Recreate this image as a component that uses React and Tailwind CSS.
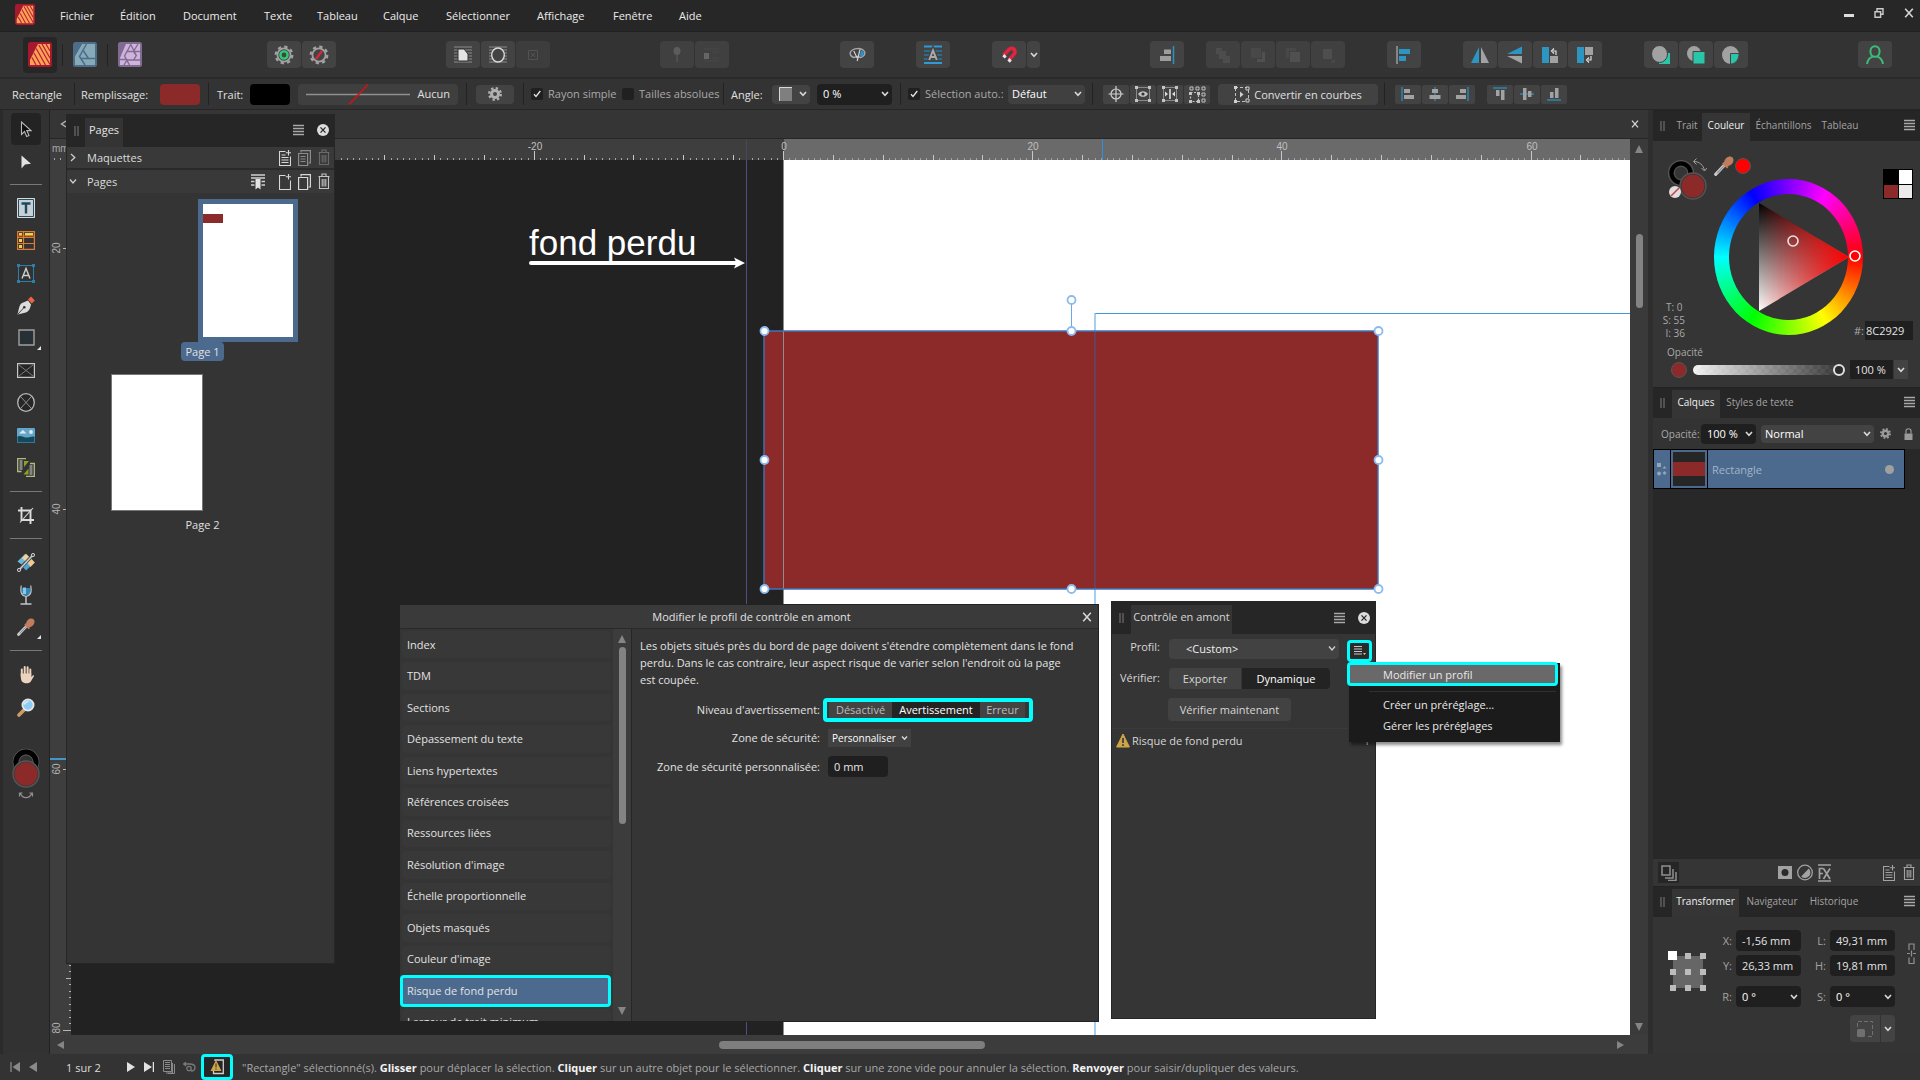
import React from "react";

const RED = "#8c2929";

/* ---------- shared pieces ---------- */

function Icon({ w = 20, h = 20, box, children, className = "" }) {
  return (
    <svg
      width={w}
      height={h}
      viewBox={box || `0 0 ${w} ${h}`}
      fill="none"
      aria-hidden="true"
      className={"shrink-0 " + className}
    >
      {children}
    </svg>
  );
}

const Chevron = ({ className = "" }) => (
  <Icon w={10} h={8} className={className}>
    <path d="M2 2l3 3.4L8 2" stroke="#d8d8d8" strokeWidth="1.6" />
  </Icon>
);

const Burger = () => (
  <button aria-label="Menu" className="shrink-0">
    <Icon w={11} h={12}>
      <path d="M0 1.5h11M0 4.5h11M0 7.5h11M0 10.5h11" stroke="#a8a8a8" strokeWidth="1.4" />
    </Icon>
  </button>
);

const Grip = () => (
  <Icon w={5} h={10}>
    <path d="M1 0v10M4 0v10" stroke="#7c7c7c" />
  </Icon>
);

const CloseDot = () => (
  <button aria-label="Fermer" className="shrink-0">
    <Icon w={12} h={12}>
      <circle cx="6" cy="6" r="6" fill="#dcdcdc" />
      <path d="M3.5 3.3l5 5.4M8.5 3.3l-5 5.4" stroke="#222" strokeWidth="1.2" />
    </Icon>
  </button>
);

const CloseX = ({ size = 10 }) => (
  <Icon w={size} h={size} box="0 0 10 10">
    <path d="M1.2 0.8l7.6 8.4M8.8 0.8L1.2 9.2" stroke="#d6d6d6" strokeWidth="1.6" />
  </Icon>
);

const Sep = ({ className = "" }) => <div className={"h-[22px] w-px shrink-0 bg-[#222] " + className} />;

function Select({ label, value, className = "", pad = "pl-2", chevron = "right-[5px]" }) {
  return (
    <div className={"relative flex shrink-0 items-center rounded-sm " + className}>
      <select
        aria-label={label}
        className={"h-full w-full appearance-none truncate bg-transparent text-white outline-none " + pad}
      >
        <option>{value}</option>
      </select>
      <Chevron className={"pointer-events-none absolute " + chevron} />
    </div>
  );
}

const Trash = ({ color = "#b9b9b9" }) => (
  <Icon w={12} h={17}>
    <path d="M0.5 3.5h11M4 3V1h4v2M1.5 4v11.5h9V4M4.2 6v7.5M6 6v7.5M7.8 6v7.5" stroke={color} strokeWidth="1.1" />
  </Icon>
);

const Warning = ({ w = 14, h = 15 }) => (
  <Icon w={w} h={h} box="0 0 14 15">
    <path d="M7 1L13.4 14H0.6z" fill="#d0a548" stroke="#d0a548" strokeLinejoin="round" />
    <path d="M7 5v5M7 11.3v1.6" stroke="#333" strokeWidth="1.6" />
  </Icon>
);

const Dropper = ({ w = 18, h = 18 }) => (
  <Icon w={w} h={h} box="0 0 18 18">
    <path d="M1.5 16.5L10 7.6" stroke="#c9c9c9" strokeWidth="2.8" strokeLinecap="round" />
    <path d="M3 15.2l6-6.3" stroke="#8a8a8a" strokeWidth="1" />
    <path d="M8 6l4.4 4.6" stroke="#c07a5a" strokeWidth="2" />
    <ellipse cx="13.3" cy="4.8" rx="3.7" ry="4.8" transform="rotate(42 13.3 4.8)" fill="#bf7d5e" />
  </Icon>
);

const PublisherLogo = ({ w, h }) => (
  <Icon w={w} h={h} box="0 0 24 25">
    <rect width="24" height="25" rx="2.5" fill="#a5182d" />
    <path d="M2 23V18L10 2H22v21z" fill="#ffa155" />
    <path
      d="M4 15.5L8 23M6 11L12.700 23M8.200 6.500L17.500 23M10.800 3L22 22.500M14 2L22 16M18 2l4 7"
      stroke="#b3253a"
      strokeWidth="1.300"
    />
  </Icon>
);

const DesignerLogo = () => (
  <Icon w={24} h={25}>
    <rect width="24" height="25" rx="2.5" fill="#4d6d88" />
    <path d="M9 2H22v21H2V14z" fill="#86aab8" />
    <path d="M13.500 2L6.500 14.500 12 23M8 16.500h14M10.500 9l5 7.500" stroke="#4d6d88" strokeWidth="1.500" />
    <path d="M2 2h7L2 14z" fill="#4d6d88" />
  </Icon>
);

const PhotoLogo = () => (
  <Icon w={24} h={25}>
    <rect width="24" height="25" rx="2.5" fill="#806c92" />
    <path d="M8 2H22v21H2V16z" fill="#d0b3dc" />
    <path
      d="M9 9.500h6.500l2.800 4-2.800 4.500H9l-2.500-4zM15.500 9.500L22 9.500M18.300 13.500L12.500 2M9 9.500L13 2M2 17.500h7M6.500 14L11.500 23M15.500 18H22M9 18l-3 5M15.500 9.500L20 2"
      stroke="#806c92"
      strokeWidth="1.400"
    />
  </Icon>
);

/* ---------- menu bar ---------- */

const MENUS = [
  ["Fichier", "w-[60px]"],
  ["Édition", "w-[63px]"],
  ["Document", "w-[81px]"],
  ["Texte", "w-[53px]"],
  ["Tableau", "w-[66px]"],
  ["Calque", "w-[63px]"],
  ["Sélectionner", "w-[91px]"],
  ["Affichage", "w-[76px]"],
  ["Fenêtre", "w-[66px]"],
  ["Aide", "w-[50px]"],
];

function MenuBar() {
  return (
    <header className="flex h-8 shrink-0 items-center border-b border-[#202020] bg-[#272727]">
      <div className="w-[60px] shrink-0 pb-0.5 pl-[15px]">
        <PublisherLogo w={20} h={21} />
      </div>
      {MENUS.map(([m, w]) => (
        <button key={m} className={"shrink-0 pt-px text-left text-[#ececec] " + w}>
          {m}
        </button>
      ))}
      <div className="ml-auto flex items-center gap-5 pb-[5px] pr-[6px]">
        <button aria-label="Réduire">
          <Icon w={10} h={10}>
            <path d="M0 7.5h10" stroke="#ddd" strokeWidth="3" />
          </Icon>
        </button>
        <button aria-label="Restaurer">
          <Icon w={10} h={10}>
            <path d="M3 3V0.8h6v5.4H7M1 3.8h5.6v5.4H1z" stroke="#ccc" strokeWidth="1.4" />
          </Icon>
        </button>
        <button aria-label="Quitter">
          <CloseX />
        </button>
      </div>
    </header>
  );
}

/* ---------- main toolbar ---------- */

function Tool({ label, children, className = "w-[34px] bg-[#434343]" }) {
  return (
    <button aria-label={label} className={"flex h-[27px] shrink-0 items-center justify-center rounded-sm " + className}>
      {children}
    </button>
  );
}

const Group = ({ children, className = "" }) => <div className={"flex shrink-0 gap-px " + className}>{children}</div>;

const GearShape = ({ children }) => (
  <Icon w={20} h={20}>
    <circle cx="10" cy="10" r="6.6" stroke="#a2a2a2" strokeWidth="1.8" />
    <circle cx="10" cy="10" r="8.3" stroke="#a2a2a2" strokeWidth="2.2" strokeDasharray="3.3 3.22" />
    {children}
  </Icon>
);

const Lines = () => <path d="M0 1h18M0 4h18M0 7h18M0 10h18M0 13h18M0 16h18" stroke="#8b8b8b" strokeWidth="1.2" />;

function Toolbar() {
  return (
    <div className="flex h-[47px] shrink-0 items-center border-b-2 border-[#2a2a2a] bg-[#333]">
      <div className="flex shrink-0 items-center pl-[23px]">
        <button aria-label="Publisher" className="flex h-9 w-[34px] items-center justify-center rounded-sm bg-[#262626]">
          <PublisherLogo w={24} h={25} />
        </button>
        <Sep className="ml-[5px] h-8" />
        <button aria-label="Designer" className="px-[10px]">
          <DesignerLogo />
        </button>
        <Sep className="h-8" />
        <button aria-label="Photo" className="pl-[10px]">
          <PhotoLogo />
        </button>
      </div>
      <Group className="ml-[125px]">
        <Tool label="Paramètres">
          <GearShape>
            <circle cx="10" cy="10" r="3.6" stroke="#2fcb74" strokeWidth="2.4" />
          </GearShape>
        </Tool>
        <Tool label="Désactiver">
          <GearShape>
            <path d="M7 14l6-8" stroke="#e0243c" strokeWidth="2.2" />
          </GearShape>
        </Tool>
      </Group>
      <Group className="ml-[110px]">
        <Tool label="Habillage">
          <Icon w={18} h={18}>
            <Lines />
            <path d="M4 3h6l4 5v7H4z" fill="#e4e4e4" stroke="#333" />
          </Icon>
        </Tool>
        <Tool label="Contour">
          <Icon w={18} h={18}>
            <Lines />
            <ellipse cx="9" cy="9" rx="6.3" ry="7" fill="#434343" stroke="#d8d8d8" strokeWidth="1.4" />
          </Icon>
        </Tool>
        <Tool label="Retirer" className="w-[34px] bg-[#3d3d3d]">
          <Icon w={10} h={10}>
            <path d="M0.5 0.5h9v9h-9zM3 3l4 4M7 3L3 7" stroke="#525252" />
          </Icon>
        </Tool>
      </Group>
      <Group className="ml-[110px]">
        <Tool label="Épingler" className="w-[34px] bg-[#404040]">
          <Icon w={8} h={16}>
            <ellipse cx="4" cy="4" rx="3.5" ry="4" fill="#5c5c5c" />
            <path d="M4 7v8" stroke="#5c5c5c" />
          </Icon>
        </Tool>
        <Tool label="Ancrer" className="w-[34px] bg-[#404040]">
          <Icon w={16} h={14}>
            <path d="M0 1h15M0 13h15M8 4h7M8 10h7" stroke="#484848" />
            <rect y="5" width="5" height="6" fill="#666" />
          </Icon>
        </Tool>
      </Group>
      <Group className="ml-[111px]">
        <Tool label="Aperçu">
          <Icon w={17} h={15}>
            <path d="M4.500 10.500C1.800 9.500.9 7.800 1.200 5.500 3.600 0.500 13 .2 15.800 5c.2 2.600-1.300 4.800-4.300 5.500L9 9.500z" stroke="#a8a8a8" strokeWidth="1.400" />
            <path d="M12 3.200l3.200 2.400-1.600 3.600-2.800.4z" fill="#2b93cf" />
            <path d="M11 2.500L8.200 14M4.800 4l3.400 7" stroke="#d0d0d0" strokeWidth="1.200" />
          </Icon>
        </Tool>
      </Group>
      <Group className="ml-[42px]">
        <Tool label="Ligne de base">
          <Icon w={18} h={20}>
            <path d="M0 1.5h18M0 18h18" stroke="#2f9ad8" strokeWidth="2" />
            <path d="M0 6h18M0 10h18M0 14h18" stroke="#2a78a6" strokeWidth="1.5" />
            <path d="M5.2 15L9 5.5 12.8 15M6.4 12h5.2" stroke="#434343" strokeWidth="4.5" />
            <path d="M5.2 15L9 5.5 12.8 15M6.4 12h5.2" stroke="#a9a9a9" strokeWidth="2" />
          </Icon>
        </Tool>
      </Group>
      <Group className="ml-[42px]">
        <Tool label="Magnétisme">
          <Icon w={16} h={18}>
            <path d="M2.5 9L8.2 3.4C10 1.9 12.8 2 13.7 4.2 14.3 6 13.8 7.4 12.7 8.6L8 14" stroke="#e5233f" strokeWidth="3.6" />
            <path d="M1.3 10.2l2-2.2 2.4 2.6-2 2zM6.4 14.4l2-2.4 2.4 2.4-2 2.4z" fill="#e6e6e6" />
          </Icon>
        </Tool>
        <Tool label="Options de magnétisme" className="w-[13px] bg-[#434343]">
          <Chevron />
        </Tool>
      </Group>
      <Group className="ml-[110px]">
        <Tool label="Aligner à droite">
          <Icon w={16} h={18}>
            <path d="M14.5 0v18" stroke="#2b93c4" strokeWidth="1.5" />
            <path d="M5 3.5h7v4.5H5zM1 10h11v5H1z" fill="#9d9d9d" />
          </Icon>
        </Tool>
      </Group>
      <Group className="ml-[22px]">
        <Tool label="Arrière-plan" className="w-[34px] bg-[#404040]">
          <Icon w={16} h={16}>
            <path d="M1 1h6v6H1zM8 9h7v7H8zM4 4h7v8H4z" fill="#4d4d4d" />
          </Icon>
        </Tool>
        <Tool label="Reculer" className="w-[34px] bg-[#404040]">
          <Icon w={16} h={16}>
            <path d="M1 1h10v10H1z" fill="#484848" />
            <path d="M12 5h3v10H7v-3h5z" fill="#505050" />
          </Icon>
        </Tool>
        <Tool label="Avancer" className="w-[34px] bg-[#404040]">
          <Icon w={16} h={16}>
            <path d="M1 1h10v3H4v7H1z" fill="#484848" />
            <path d="M5 5h10v10H5z" fill="#505050" />
          </Icon>
        </Tool>
        <Tool label="Premier plan" className="w-[34px] bg-[#404040]">
          <Icon w={16} h={16}>
            <path d="M3 2h9v10H3z" fill="#4e4e4e" />
            <path d="M12 13h3v3h-4z" fill="#484848" />
          </Icon>
        </Tool>
      </Group>
      <Group className="ml-[42px]">
        <Tool label="Alignement">
          <Icon w={16} h={18}>
            <path d="M1 0v18" stroke="#aaa" strokeWidth="1.3" />
            <path d="M3 3h11v5H3zM3 10h7v5H3z" fill="#2d95c2" />
          </Icon>
        </Tool>
      </Group>
      <Group className="ml-[42px]">
        <Tool label="Miroir horizontal">
          <Icon w={18} h={18}>
            <path d="M8 1v16H0z" fill="#2d95c2" />
            <path d="M10 1v16h8z" fill="#a2a2a2" />
          </Icon>
        </Tool>
        <Tool label="Miroir vertical">
          <Icon w={16} h={18}>
            <path d="M15 8V0.5L0 8z" fill="#2d95c2" />
            <path d="M15 10v7.5L0 10z" fill="#a2a2a2" />
          </Icon>
        </Tool>
        <Tool label="Rotation gauche">
          <Icon w={16} h={18}>
            <path d="M0 1h7v16H0z" fill="#2d95c2" />
            <path d="M8 10h8v7H8z" fill="#a2a2a2" />
            <path d="M14 9V5h-3M12 2.5L9.5 5 12 7.5" stroke="#e0e0e0" strokeWidth="1.2" />
          </Icon>
        </Tool>
        <Tool label="Rotation droite">
          <Icon w={16} h={18}>
            <path d="M0 1h7v16H0z" fill="#2d95c2" />
            <path d="M8 1h8v8H8z" fill="#a2a2a2" />
            <path d="M14 10v4h-3M12 11.5L9.5 14l2.5 2.5" stroke="#e0e0e0" strokeWidth="1.2" />
          </Icon>
        </Tool>
      </Group>
      <Group className="ml-[42px]">
        <Tool label="Ajouter">
          <Icon w={18} h={18}>
            <path d="M7 7h11v11H7z" fill="#29c7a7" />
            <ellipse cx="7.5" cy="8" rx="8" ry="8.5" fill="#a2a2a2" stroke="#434343" />
          </Icon>
        </Tool>
        <Tool label="Soustraire">
          <Icon w={18} h={18}>
            <ellipse cx="7" cy="7.5" rx="7" ry="7.5" fill="#a2a2a2" />
            <path d="M6 5.5h12V18H6z" fill="#29c7a7" stroke="#434343" />
          </Icon>
        </Tool>
        <Tool label="Intersection">
          <Icon w={18} h={18}>
            <ellipse cx="8.5" cy="9" rx="8.5" ry="9" fill="#a2a2a2" />
            <path d="M8.5 7.5H17C17 13 14 18 8.5 18z" fill="#29c7a7" stroke="#434343" />
          </Icon>
        </Tool>
      </Group>
      <Group className="ml-auto pr-7">
        <Tool label="Compte">
          <Icon w={18} h={20}>
            <ellipse cx="9" cy="6.5" rx="4.6" ry="5.3" stroke="#3dbb78" strokeWidth="2" />
            <path d="M1 19c.6-4 3-6.600 6-7.400M17 19c-.6-4-3-6.600-6-7.400" stroke="#3dbb78" strokeWidth="2" />
          </Icon>
        </Tool>
      </Group>
    </div>
  );
}

/* ---------- context bar ---------- */

function Check({ label, checked, className = "" }) {
  return (
    <label className={"flex shrink-0 items-center gap-[5px] whitespace-nowrap text-[#a9a9a9] " + className}>
      <span className="relative flex size-3 shrink-0">
        <input type="checkbox" defaultChecked={checked} className="peer size-3 appearance-none rounded-xs bg-[#202020]" />
        <Icon w={12} h={12} className="pointer-events-none absolute hidden peer-checked:block">
          <path d="M3 6.300l2 2.200L9.300 3" stroke="#e4e4e4" strokeWidth="1.300" />
        </Icon>
      </span>
      {label}
    </label>
  );
}

function MiniTool({ label, children }) {
  return (
    <button aria-label={label} className="flex h-[19px] w-[26px] items-center justify-center rounded-xs bg-[#434343]">
      {children}
    </button>
  );
}

const corners = "M0 0h3v3H0zM13 0h3v3h-3zM0 13h3v3H0zM13 13h3v3h-3z";

function ContextBar() {
  return (
    <div className="flex h-[31px] shrink-0 items-center border-b border-[#262626] bg-[#333] text-[#e0e0e0]">
      <span className="w-[74px] shrink-0 pl-3 pt-px">Rectangle</span>
      <Sep />
      <span className="w-[79px] shrink-0 whitespace-nowrap pl-1.5 pt-px">Remplissage:</span>
      <button aria-label="Couleur de remplissage" className="ml-[6px] h-[21px] w-10 shrink-0 rounded-sm bg-[#8c2929]" />
      <Sep className="mx-2" />
      <span className="w-[33px] shrink-0 pt-px">Trait:</span>
      <button aria-label="Couleur du trait" className="h-[21px] w-10 shrink-0 rounded-sm bg-black" />
      <button className="ml-2 flex h-[21px] w-40 shrink-0 items-center justify-between rounded-sm bg-[#3f3f3f] px-2">
        <Icon w={106} h={21}>
          <path d="M0 10.500h104" stroke="#8f8f8f" strokeWidth="1.500" />
          <path d="M43 20.500L62 0.500" stroke="#d01414" strokeWidth="1.600" />
        </Icon>
        Aucun
      </button>
      <Sep className="ml-2" />
      <button aria-label="Réglages" className="ml-[9px] flex h-[19px] w-[38px] shrink-0 items-center justify-center rounded-sm bg-[#434343]">
        <Icon w={14} h={14}>
          <circle cx="7" cy="7" r="3.500" stroke="#b0b0b0" strokeWidth="3" />
          <circle cx="7" cy="7" r="5.800" stroke="#b0b0b0" strokeWidth="2.400" strokeDasharray="2.300 2.255" />
        </Icon>
      </button>
      <Sep className="ml-[9px]" />
      <Check label="Rayon simple" checked className="ml-[7px] w-[91px]" />
      <Check label="Tailles absolues" className="w-[101px]" />
      <Sep />
      <span className="w-[48px] shrink-0 pl-[7px] pt-px">Angle:</span>
      <button aria-label="Type d'angle" className="flex h-[19px] w-[38px] shrink-0 items-center justify-between rounded-sm bg-[#434343] pl-[7px] pr-0.5">
        <Icon w={13} h={14}>
          <path d="M0 0h13v14H0z" fill="#7f7f7f" />
          <path d="M0.500 14V0.500H13" stroke="#d8d8d8" />
        </Icon>
        <Chevron />
      </button>
      <Select label="Rayon" value="0 %" className="ml-[7px] h-[21px] w-[75px] bg-[#1f1f1f]" pad="pl-[6px]" chevron="right-[2px]" />
      <Sep className="ml-2" />
      <Check label="Sélection auto.:" checked className="ml-[7px] w-[100px]" />
      <Select label="Sélection automatique" value="Défaut" className="h-[19px] w-[77px] bg-[#404040]" pad="pl-1" chevron="right-[2px]" />
      <Sep className="ml-[7px]" />
      <div className="ml-[10px] flex shrink-0 gap-px">
        <MiniTool label="Origine">
          <Icon w={16} h={16}>
            <circle cx="8" cy="8" r="5" stroke="#d0d0d0" strokeWidth="1.200" />
            <path d="M8 0v16M0.500 8h15" stroke="#d0d0d0" strokeWidth="1.200" />
          </Icon>
        </MiniTool>
        <MiniTool label="Masquer la sélection">
          <Icon w={16} h={16}>
            <path d="M1.500 1.500h13v13h-13z" stroke="#8a8a8a" />
            <path d={corners} fill="#c4c4c4" />
            <path d="M3 8c2.600-3.800 7.400-3.800 10 0-2.600 3.800-7.400 3.800-10 0z" fill="#c4c4c4" />
            <circle cx="8" cy="8" r="1.600" fill="#333" />
          </Icon>
        </MiniTool>
        <MiniTool label="Poignées d'alignement">
          <Icon w={16} h={16}>
            <path d="M1.500 1.500h13v13h-13z" stroke="#8a8a8a" />
            <path d={corners} fill="#c4c4c4" />
            <path d="M8 3v10" stroke="#ddd" strokeWidth="1.600" />
            <path d="M3 5.500L6 8l-3 2.500zM13 5.500L10 8l3 2.500z" fill="#ddd" />
          </Icon>
        </MiniTool>
        <MiniTool label="Transformer séparément">
          <Icon w={17} h={17}>
            <path d="M1 1h3v3H1zM7 1h3v3H7zM13 1h3v3h-3zM13 7h3v3h-3zM13 13h3v3h-3z" stroke="#c0c0c0" strokeWidth="1" />
            <path d="M1.500 6.500h8v9h-8z" stroke="#c4c4c4" strokeWidth="1.200" strokeDasharray="2 1.500" />
            <path d="M0 6h3v3H0zM8 6h3v3H8zM0 14h3v3H0zM8 14h3v3H8z" fill="#c4c4c4" />
          </Icon>
        </MiniTool>
      </div>
      <button className="ml-2 flex h-[21px] w-40 shrink-0 items-center justify-center gap-1 whitespace-nowrap rounded-sm bg-[#424242]">
        <Icon w={16} h={17}>
          <path d="M1.500 2v13M1 1.500h12M14.500 4v10M3 15.500h10" stroke="#c0c0c0" strokeDasharray="3 2" />
          <path d="M0 0h3v3H0zM0 14h3v3H0z" fill="#d0d0d0" />
          <path d="M12 1h3v3h-3zM12 13h3v3h-3z" stroke="#d0d0d0" />
          <path d="M6 5.500L9.500 8.500 6 11.500z" fill="#d0d0d0" />
        </Icon>
        <span className="pt-px">Convertir en courbes</span>
      </button>
      <Sep className="ml-[6px]" />
      <div className="ml-[10px] flex shrink-0 gap-px">
        <MiniTool label="Aligner à gauche">
          <Icon w={14} h={14}>
            <path d="M1 0v14" stroke="#2b86ae" strokeWidth="1.500" />
            <path d="M3 2h6v4H3zM3 8h10v4H3z" fill="#a2a2a2" />
          </Icon>
        </MiniTool>
        <MiniTool label="Centrer horizontalement">
          <Icon w={14} h={14}>
            <path d="M7 0v14" stroke="#2b86ae" strokeWidth="1.500" />
            <path d="M4 2h6v4H4zM1.500 8h11v4h-11z" fill="#a2a2a2" />
          </Icon>
        </MiniTool>
        <MiniTool label="Aligner à droite">
          <Icon w={14} h={14}>
            <path d="M13 0v14" stroke="#2b86ae" strokeWidth="1.500" />
            <path d="M5 2h6v4H5zM1 8h10v4H1z" fill="#a2a2a2" />
          </Icon>
        </MiniTool>
      </div>
      <div className="ml-[12px] flex shrink-0 gap-px">
        <MiniTool label="Aligner en haut">
          <Icon w={14} h={14}>
            <path d="M0 1h14" stroke="#2b86ae" strokeWidth="1.500" />
            <path d="M3 3h3.500v6H3zM8 3h3.500v10H8z" fill="#a2a2a2" />
          </Icon>
        </MiniTool>
        <MiniTool label="Centrer verticalement">
          <Icon w={14} h={14}>
            <path d="M0 7h14" stroke="#2b86ae" strokeWidth="1.500" />
            <path d="M3 1h3.500v12H3zM8 4h3.500v6H8z" fill="#a2a2a2" />
          </Icon>
        </MiniTool>
        <MiniTool label="Aligner en bas">
          <Icon w={14} h={14}>
            <path d="M0 13h14" stroke="#2b86ae" strokeWidth="1.500" />
            <path d="M3 5h3.500v6H3zM8 1h3.500v10H8z" fill="#a2a2a2" />
          </Icon>
        </MiniTool>
      </div>
    </div>
  );
}

/* ---------- left tool column ---------- */

function SideTool({ label, children, className = "h-[33px]", corner }) {
  return (
    <button aria-label={label} className={"relative flex w-full items-center justify-center " + className}>
      {children}
      {corner && (
        <Icon w={4} h={4} className="absolute bottom-1 right-2">
          <path d="M4 0v4H0z" fill="#e6e6e6" />
        </Icon>
      )}
    </button>
  );
}

const Rule = ({ className = "" }) => <div className={"h-px w-8 shrink-0 bg-[#787878] " + className} />;

function ToolColumn() {
  return (
    <aside className="flex w-[50px] shrink-0 flex-col items-center border-l-[3px] border-r border-l-[#2b2b2b] border-r-[#222] bg-[#323232] pt-[3px]">
      <button aria-label="Déplacement" className="flex h-8 w-[30px] shrink-0 items-center justify-center rounded bg-[#232323]">
        <Icon w={12} h={17}>
          <path d="M1.500 1v12.500l3-3 2.200 5 2.300-1.100-2.200-4.800H11z" fill="#0d0d0d" stroke="#b8b8b8" strokeWidth="1.100" />
        </Icon>
      </button>
      <SideTool label="Noeud">
        <Icon w={10} h={14}>
          <path d="M0.500 0.500v13l3.500-4 6-.8z" fill="#e2e2e2" />
        </Icon>
      </SideTool>
      <Rule className="mb-[7px] mt-[6px]" />
      <div className="grid h-[292px] w-full shrink-0 grid-rows-9">
        <SideTool label="Texte cadre" className="h-full">
          <Icon w={18} h={20}>
            <path d="M0.500 0.500h17v19H0.500z" fill="#c6d0d6" stroke="#d8d8d8" />
            <path d="M1.500 1.500h15v17h-15z" stroke="#244f63" />
            <path d="M4.500 5.500h9M9 5.500v10" stroke="#1e4a5e" strokeWidth="2.400" />
          </Icon>
        </SideTool>
        <SideTool label="Tableau" className="h-full">
          <Icon w={18} h={19}>
            <path d="M0 3.500h18v3H0z" fill="#8a4a24" />
            <path d="M0.600 0.600h16.800v17.800H0.600zM6.500 0v19M0 6.500h18M0 12.500h18" stroke="#dd7a35" strokeWidth="1.200" />
            <path d="M2 2h3v2.500H2zM8 2h8v2.500H8zM2 8h3v3H2zM2 14h3v3H2z" fill="#f2cf4a" />
          </Icon>
        </SideTool>
        <SideTool label="Texte artistique" className="h-full">
          <Icon w={18} h={19}>
            <path d="M1.500 1.500h15v16h-15z" stroke="#2f7ea8" />
            <path d="M0 0h3v3H0zM15 0h3v3h-3zM0 16h3v3H0zM15 16h3v3h-3z" fill="#2f7ea8" />
            <path d="M5 14.500L9 4.500l4 10M6.400 11.500h5.200" stroke="#d0d0d0" strokeWidth="1.400" />
          </Icon>
        </SideTool>
        <SideTool label="Plume" className="h-full">
          <Icon w={18} h={19}>
            <path d="M0.500 18.500C2 13 2 9 5 7l6-2.500 3 4C13 13 12 16 7 17z" fill="#dcdcdc" />
            <path d="M1 18l6-6.500" stroke="#444" />
            <circle cx="7.300" cy="11.300" r="1.300" fill="#333" />
            <path d="M11 3.500L14 0.500l3.800 4-3 3z" fill="#ee6348" />
          </Icon>
        </SideTool>
        <SideTool label="Rectangle" corner className="h-full">
          <Icon w={17} h={17}>
            <path d="M1 1h15v15H1z" fill="#263035" stroke="#a0a0a0" strokeWidth="1.400" />
          </Icon>
        </SideTool>
        <SideTool label="Cadre image" className="h-full">
          <Icon w={18} h={15}>
            <path d="M0.600 0.600h16.800v13.800H0.600z" fill="#262626" stroke="#c8c8c8" strokeWidth="1.200" />
            <path d="M2 2l14 11M16 2L2 13" stroke="#7a7a7a" />
          </Icon>
        </SideTool>
        <SideTool label="Cadre image ellipse" className="h-full">
          <Icon w={18} h={19}>
            <ellipse cx="9" cy="9.500" rx="8.300" ry="8.800" fill="#262626" stroke="#b8b8b8" strokeWidth="1.300" />
            <path d="M4 4l10 11M14 4L4 15" stroke="#909090" />
          </Icon>
        </SideTool>
        <SideTool label="Image" className="h-full">
          <Icon w={18} h={15}>
            <rect width="18" height="15" rx="1" fill="#5fa5cc" />
            <path d="M0.500 8.500c3-1.500 6 .5 8.500 1s5-1.500 8.500-1v6h-17z" fill="#14495c" />
            <path d="M2 5.500L6 2l3.500 3.500z" fill="#e8e8e8" />
            <circle cx="14" cy="4" r="1.900" fill="#e8e8e8" />
          </Icon>
        </SideTool>
        <SideTool label="Fusion de données" className="h-full">
          <Icon w={18} h={19}>
            <path d="M4.500 13.500H0.700V0.700H9M13 5.500h4.300v12.800H9" stroke="#b3ba85" strokeWidth="1.300" />
            <path d="M2.500 3h3M2.500 5h3M2.500 7h3M2.500 9h3M2.500 11h3M12.500 8h3M12.500 10h3M12.500 12h3M12.500 14h3M12.500 16h3" stroke="#d8d8d8" />
            <path d="M7 3h5L7 9zM11.500 16.500h-5l5-6z" fill="#8fa122" />
          </Icon>
        </SideTool>
      </div>
      <Rule className="my-[7px]" />
      <SideTool label="Recadrage">
        <Icon w={16} h={17}>
          <path d="M3.500 0v13H16M0 3.500h12.500V17" stroke="#dcdcdc" strokeWidth="1.900" />
          <path d="M2 15.500L15 1" stroke="#dcdcdc" strokeWidth="1.100" />
        </Icon>
      </SideTool>
      <Rule className="mb-[7px] mt-[6px]" />
      <SideTool label="Dégradé">
        <Icon w={18} h={19}>
          <path d="M0.500 8.500L8 1l4 3-7.500 7.500z" fill="#69b9dd" />
          <path d="M5 5l4-4.200 3 3L8 8z" fill="#f2cf9c" />
          <path d="M5.500 13.500L14 6l3.500 3.500-8.500 8z" fill="#4aa6d2" />
          <path d="M10.500 10L14.500 6l3.300 3.500L13.500 14z" fill="#f0c890" />
          <path d="M2.500 16.500l13-14" stroke="#555" strokeWidth="3" />
          <path d="M2.500 16.500l13-14" stroke="#cfcfcf" strokeWidth="1.300" />
          <circle cx="2" cy="17" r="1.600" fill="#444" stroke="#ccc" />
          <circle cx="16" cy="2" r="1.600" fill="#444" stroke="#ccc" />
        </Icon>
      </SideTool>
      <SideTool label="Transparence" className="h-[31px]">
        <Icon w={12} h={20}>
          <path d="M1.500 3h9v5.500c-1 2-8 2-9 0z" fill="#2d88bd" />
          <path d="M3 2.500h3v6.500H3z" fill="#8cc4e4" />
          <path d="M1.300 0.500C.3 6 .6 10.800 6 11.300c5.400-.5 5.700-5.300 4.700-10.800" stroke="#c4c4c4" strokeWidth="1.200" />
          <path d="M6 11.500v7M0.500 19h11" stroke="#c4c4c4" strokeWidth="1.500" />
        </Icon>
      </SideTool>
      <SideTool label="Sélecteur de couleur" corner>
        <Dropper w={18} h={20} />
      </SideTool>
      <Rule className="my-[7px]" />
      <SideTool label="Afficher">
        <Icon w={16} h={19}>
          <path
            d="M3.800 11V4.500M6.700 9V2M9.600 9V2.300M12.300 10V4.500"
            stroke="#ecd3bd"
            strokeWidth="2"
            strokeLinecap="round"
          />
          <path d="M2.700 8.500h10.600V12l1.500-1.600c.9-.6 1.500.1 1.100.9L12.500 17c-2 1.700-6 1.700-8 0-1.500-1.500-1.800-3.500-1.800-8.500z" fill="#ecd3bd" />
        </Icon>
      </SideTool>
      <SideTool label="Zoom" className="h-8">
        <Icon w={18} h={19}>
          <path d="M2 17l4.500-4.500" stroke="#d09a62" strokeWidth="3.600" strokeLinecap="round" />
          <circle cx="11" cy="7" r="5.600" fill="#8ccbf4" stroke="#e6e6e6" strokeWidth="1.800" />
          <path d="M7.500 6.500C8 4.500 9.500 3.500 11.500 3.500" stroke="#d4edff" strokeWidth="1.600" />
        </Icon>
      </SideTool>
      <button aria-label="Couleurs actives" className="mt-6">
        <Icon w={30} h={54}>
          <circle cx="15" cy="15" r="13" stroke="#565656" />
          <circle cx="15" cy="15" r="10" stroke="#000" strokeWidth="5" />
          <circle cx="15" cy="15" r="7" stroke="#565656" />
          <circle cx="15" cy="27" r="13" fill="#3a3a3a" stroke="#565656" strokeWidth="1.400" />
          <circle cx="15" cy="27" r="11.500" fill={RED} />
          <path d="M9.500 46.500c2 5.500 9 5.500 11 0M8.500 49.500V46h3M21.500 49.500V46h-3" stroke="#8f8f8f" strokeWidth="1.200" />
        </Icon>
      </button>
    </aside>
  );
}

/* ---------- rulers and canvas ---------- */

const H_UNIT = 12.46;
const V_UNIT = 13.03;

function HRuler() {
  const zero = 734;
  const ticks = [];
  for (let i = -118; i <= 136; i++) {
    const x = Math.round(zero + (i * H_UNIT) / 2);
    const len = i % 40 === 0 ? 9 : i % 8 === 0 ? 5 : 2;
    ticks.push(<path key={i} d={`M${x - 0.5} 21v-${len}`} stroke={len === 2 ? "#a5a5a5" : "#c8c8c8"} />);
  }
  return (
    <div className="relative flex h-[21px] shrink-0 overflow-hidden bg-[#3e3e3e] font-['Liberation_Sans',sans-serif] text-[10px]">
      <div className="w-[734px] shrink-0" />
      <div className="flex-1 bg-[#6a6a6a]" />
      <svg className="absolute inset-0 h-full w-full" fill="none" aria-hidden="true">
        {ticks}
        <path d="M696.500 0v21" stroke="#4a4660" />
        <path d="M1052.500 0v21" stroke="#2f8fe0" />
        <text x="2" y="13" fill="#a8a8a8">mm</text>
        {[-20, 0, 20, 40, 60].map((n) => (
          <text key={n} x={Math.round(zero + n * H_UNIT)} y="11" textAnchor="middle" fill="#c0c0c0">
            {n}
          </text>
        ))}
      </svg>
    </div>
  );
}

function VRuler() {
  const zero = -172.5;
  const ticks = [];
  for (let i = 26; i <= 162; i++) {
    const y = Math.round(zero + (i * V_UNIT) / 2);
    const len = i % 40 === 0 ? 8 : i % 8 === 0 ? 5 : 2;
    ticks.push(<path key={i} d={`M21 ${y + 0.5}h-${len}`} stroke="#b4b4b4" />);
  }
  return (
    <div className="relative w-[21px] shrink-0 overflow-hidden bg-[#3e3e3e] font-['Liberation_Sans',sans-serif] text-[10px]">
      <svg className="absolute inset-0 h-full w-full" fill="none" aria-hidden="true">
        {ticks}
        {[20, 40, 60, 80].map((n) => {
          const y = Math.round(zero + n * V_UNIT);
          return (
            <g key={n}>
              <path d={`M13 ${y + 0.5}h9`} stroke="#b4b4b4" />
              <text x="10" y={Math.min(y, 868)} transform={`rotate(-90 10 ${Math.min(y, 868)})`} textAnchor="middle" fill="#b4b4b4">
                {n}
              </text>
            </g>
          );
        })}
        <path d="M0 599h21" stroke="#3f97cc" strokeWidth="2" />
      </svg>
    </div>
  );
}

const HANDLES = [
  [693, 171],
  [1000, 171],
  [1307, 171],
  [693, 300],
  [1307, 300],
  [693, 429],
  [1000, 429],
  [1307, 429],
  [1000, 140],
];

function Canvas() {
  return (
    <div className="relative flex-1 overflow-hidden bg-[#222]">
      <div className="absolute inset-y-0 left-[713px] right-0 bg-white" />
      <div className="absolute left-[693px] top-[171px] h-[258px] w-[614px] bg-[#8c2929]" />
      <p className="absolute left-[458px] top-[63px] font-['Liberation_Sans',sans-serif] text-[35px] leading-10 text-white">
        fond perdu
      </p>
      <svg className="absolute inset-0 h-full w-full" fill="none" aria-hidden="true">
        <path d="M460 103h206" stroke="#fff" strokeWidth="4" strokeLinecap="round" />
        <path d="M674 103l-11-5.500 2.500 5.500-2.500 5.500z" fill="#fff" />
        <path d="M675.500 0v1000" stroke="#544d85" />
        <path d="M712.500 0v1000" stroke="#8d8d8d" />
        <path d="M1024 153.500H2000" stroke="#3c97dc" />
        <path d="M1024 153v18M1024 429v600" stroke="#7dbcee" strokeWidth="1.400" />
        <path d="M1024 171v258" stroke="#5a4a78" strokeWidth="1.400" />
        <path d="M693 171h614v258H693z" stroke="#3f74b8" strokeWidth="1.400" />
        <path d="M1000.500 144v24" stroke="#6aa9e4" />
        {HANDLES.map(([x, y]) => (
          <circle key={`${x}-${y}`} cx={x + 0.5} cy={y} r="4" fill="#fff" stroke="#8bbbee" strokeWidth="1.800" />
        ))}
      </svg>
    </div>
  );
}

/* ---------- floating: pages ---------- */

const DocAdd = ({ lines, color = "#d8d8d8" }) => (
  <Icon w={12} h={16}>
    <path d="M6.500 1.500h-6v14h11V6.500M9.500 0v5.500M6.800 2.700h5.400" stroke={color} strokeWidth="1.100" />
    {lines && <path d="M2.500 5h4M2.500 7.500h7M2.500 10h7M2.500 12.500h7" stroke={color} />}
  </Icon>
);

const DocCopy = ({ lines, color = "#d8d8d8" }) => (
  <Icon w={13} h={16}>
    <path d="M0.600 3.500h9v12h-9zM3 2.500V.6h9.400v12.400H10.500" stroke={color} strokeWidth="1.200" />
    {lines && <path d="M2.500 6.500h5M2.500 9h5M2.500 11.500h5" stroke={color} />}
  </Icon>
);

function PagesPanel() {
  return (
    <section className="absolute left-[16px] top-1 flex h-[850px] w-[269px] flex-col border border-[#262626] bg-[#343434]">
      <div className="flex h-8 shrink-0 items-stretch bg-[#262626] pl-[7px]">
        <div className="flex w-[11px] items-center">
          <Grip />
        </div>
        <h2 className="mt-[3px] flex w-[38px] items-center justify-center bg-[#343434] pb-[5px] text-[#e4e4e4]">Pages</h2>
        <div className="ml-auto flex items-center gap-[13px] pb-0.5 pr-[5px]">
          <Burger />
          <CloseDot />
        </div>
      </div>
      <div className="flex h-[23px] shrink-0 items-center border-b-2 border-[#2a2a2a] bg-[#393939] pl-[3px] pr-1">
        <Icon w={7} h={9}>
          <path d="M1 1l3.800 3.500L1 8" stroke="#ccc" strokeWidth="1.300" />
        </Icon>
        <span className="ml-[10px] text-[#dcdcdc]">Maquettes</span>
        <div className="ml-auto flex items-center gap-[7px]">
          <DocAdd lines />
          <DocCopy lines color="#8c8c8c" />
          <Trash color="#6a6a6a" />
        </div>
      </div>
      <div className="flex h-[23px] shrink-0 items-center bg-[#393939] pl-[2px] pr-1">
        <Icon w={8} h={7}>
          <path d="M1 1.500l3 3.500 3-3.500" stroke="#ccc" strokeWidth="1.300" />
        </Icon>
        <span className="ml-[10px] text-[#dcdcdc]">Pages</span>
        <div className="ml-auto flex items-center gap-[7px]">
          <Icon w={14} h={16} className="mr-[7px]">
            <path d="M0 1h14M0 4h14M0 7.500h3.500M10.500 7.500H14M0 11h3.500M10.500 11H14" stroke="#d0d0d0" strokeWidth="1.300" />
            <path d="M4.500 5h5v10.500L7 13.500l-2.500 2z" fill="#e4e4e4" />
          </Icon>
          <DocAdd />
          <DocCopy />
          <Trash color="#c4c4c4" />
        </div>
      </div>
      <div className="flex flex-col pt-[6px] text-[#e0e0e0]">
        <button
          aria-label="Page 1"
          className="ml-[131px] flex h-[143px] w-[100px] items-start border-[5px] border-[#4c6a8e] bg-white pt-[10px]"
        >
          <span className="h-[9px] w-5 bg-[#8c2929]" />
        </button>
        <span className="ml-[114px] flex h-[19px] w-[43px] items-center justify-center rounded bg-[#4c6a8e]">Page 1</span>
        <button aria-label="Page 2" className="ml-[44px] mt-[13px] h-[137px] w-[92px] border border-[#777] bg-white" />
        <span className="ml-[114px] mt-[4px] flex h-[19px] w-[43px] items-center justify-center">Page 2</span>
      </div>
    </section>
  );
}

/* ---------- floating: edit preflight profile ---------- */

const CHECKS = [
  "Index",
  "TDM",
  "Sections",
  "Dépassement du texte",
  "Liens hypertextes",
  "Références croisées",
  "Ressources liées",
  "Résolution d'image",
  "Échelle proportionnelle",
  "Objets masqués",
  "Couleur d'image",
  "Risque de fond perdu",
  "Largeur de trait minimum",
];

const ArrowUp = () => (
  <Icon w={8} h={8}>
    <path d="M4 0l4 8H0z" fill="#858585" />
  </Icon>
);

const ArrowDown = () => (
  <Icon w={8} h={8}>
    <path d="M4 8l4-8H0z" fill="#858585" />
  </Icon>
);

function ProfileDialog() {
  return (
    <section className="absolute left-[349px] top-[494px] flex h-[418px] w-[700px] flex-col border border-[#222] bg-[#353535] text-[#e2e2e2]">
      <div className="flex h-6 shrink-0 items-center justify-center border-b border-[#2a2a2a] bg-[#3a3a3a]">
        <h2 className="flex-1 pl-[21px] text-center">Modifier le profil de contrôle en amont</h2>
        <button aria-label="Fermer" className="mr-[6px]">
          <CloseX />
        </button>
      </div>
      <div className="flex min-h-0 flex-1">
        <div className="w-[213px] shrink-0 overflow-hidden">
          <ul className="grid h-[409px] w-[211px] grid-rows-13">
            {CHECKS.map((c) => {
              const on = c === "Risque de fond perdu";
              return (
                <li key={c} className={"flex min-h-0 " + (on ? "" : "py-[2px] pl-0.5")}>
                  <button
                    className={
                      "w-full rounded-sm text-left " +
                      (on ? "border-[3px] border-[#00ffff] bg-[#4c6a8e] pl-[4px]" : "bg-[#383838] pl-[5px]")
                    }
                  >
                    {c}
                  </button>
                </li>
              );
            })}
          </ul>
        </div>
        <div className="flex w-[19px] shrink-0 flex-col items-center border-r border-[#262626] bg-[#3c3c3c] py-[6px]">
          <ArrowUp />
          <div className="mt-1 h-[177px] w-[7px] rounded-full bg-[#838383]" />
          <div className="mt-auto">
            <ArrowDown />
          </div>
        </div>
        <div className="flex-1 pl-2 pt-2">
          <p className="whitespace-nowrap leading-[17px]">
            Les objets situés près du bord de page doivent s'étendre complètement dans le fond
            <br />
            perdu. Dans le cas contraire, leur aspect risque de varier selon l'endroit où la page
            <br />
            est coupée.
          </p>
          <div className="mt-[10px] grid grid-cols-[180px_1fr] items-center gap-x-[3px]">
            <span className="h-6 whitespace-nowrap text-right leading-6">Niveau d'avertissement:</span>
            <div className="flex h-6 w-[210px] items-stretch overflow-hidden rounded-sm border-4 border-[#00ffff] pl-0.5 leading-4">
              <button className="flex w-[63px] items-center justify-center bg-[#434343] text-[#bdbdbd]">Désactivé</button>
              <button aria-pressed="true" className="flex w-[88px] items-center justify-center bg-[#232323] text-white">
                Avertissement
              </button>
              <button className="flex w-[45px] items-center justify-center bg-[#434343] text-[#bdbdbd]">Erreur</button>
            </div>
            <label htmlFor="zone" className="mt-[7px] text-right">Zone de sécurité:</label>
            <div className="relative ml-[5px] mt-[7px] flex h-[18px] w-[83px] items-center bg-[#414141]">
              <select id="zone" className="h-full w-full appearance-none bg-transparent pl-1 text-[10px] text-white outline-none">
                <option>Personnaliser</option>
              </select>
              <Icon w={7} h={6} className="pointer-events-none absolute right-[3px]">
                <path d="M1 1.500l2.500 2.700L6 1.500" stroke="#d8d8d8" strokeWidth="1.400" />
              </Icon>
            </div>
            <label htmlFor="zone-perso" className="mt-[9px] whitespace-nowrap text-right">
              Zone de sécurité personnalisée:
            </label>
            <input
              id="zone-perso"
              defaultValue="0 mm"
              className="ml-[5px] mt-[9px] h-[21px] w-[60px] rounded-sm bg-[#1f1f1f] pl-[6px] text-[#e6e6e6]"
            />
          </div>
        </div>
      </div>
    </section>
  );
}

/* ---------- floating: preflight panel ---------- */

function PreflightPanel() {
  return (
    <section className="absolute left-[1061px] top-[491px] h-[418px] w-[265px] border border-[#262626] bg-[#353535] text-[#d6d6d6]">
      <div className="flex h-8 items-stretch bg-[#262626] pl-[7px]">
        <div className="flex w-[12px] items-center">
          <Grip />
        </div>
        <h2 className="mt-[3px] flex w-[101px] items-center justify-center whitespace-nowrap bg-[#353535] pb-[5px]">
          Contrôle en amont
        </h2>
        <div className="ml-auto flex items-center gap-[13px] pb-px pr-[5px]">
          <Burger />
          <CloseDot />
        </div>
      </div>
      <div className="flex h-6 items-center pt-px">
        <label htmlFor="profil" className="w-[48px] text-right">Profil:</label>
        <div className="relative ml-[9px] mt-1 flex h-5 w-[170px] items-center rounded-sm bg-[#424242]">
          <select id="profil" className="h-full w-full appearance-none bg-transparent pl-[17px] text-[#f0f0f0] outline-none">
            <option>{"<Custom>"}</option>
          </select>
          <Icon w={8} h={7} className="pointer-events-none absolute right-[3px]">
            <path d="M1 1.500l3 3.500 3-3.500" stroke="#d0d0d0" strokeWidth="1.300" />
          </Icon>
        </div>
        <button
          aria-label="Options de profil"
          className="ml-2 mt-2 flex h-[22px] w-[25px] shrink-0 items-center justify-center rounded-sm border-[3px] border-[#00ffff] bg-[#2a2a2a]"
        >
          <Icon w={12} h={9}>
            <path d="M0 0.500h8M0 3h8M0 5.500h8M0 8h8" stroke="#c8c8c8" strokeWidth="1.200" />
            <path d="M9 7h3l-1.500 2z" fill="#c8c8c8" />
          </Icon>
        </button>
      </div>
      <div className="mt-[10px] flex h-[21px] items-center">
        <span className="w-[48px] pb-px text-right">Vérifier:</span>
        <div className="ml-[9px] flex h-[21px] gap-px">
          <button className="w-[72px] rounded-l-sm bg-[#424242]">Exporter</button>
          <button aria-pressed="true" className="w-[88px] rounded-r-sm bg-[#232323] text-white">
            Dynamique
          </button>
        </div>
      </div>
      <button className="ml-[56px] mt-[9px] block h-[23px] w-[123px] rounded-sm bg-[#424242]">Vérifier maintenant</button>
      <div className="mt-[7px] flex h-[24px] items-center gap-[2px] border-t border-[#3a3a3a] pl-1 pr-[5px]">
        <Warning />
        <span>Risque de fond perdu</span>
        <span className="ml-auto">1</span>
      </div>

      <ul className="absolute left-[237px] top-[61px] h-[79px] w-[211px] bg-[#1b1b1b] text-[#e8e8e8] shadow-[2px_3px_3px_rgba(0,0,0,0.45)]">
        <li>
          <button className="-ml-0.5 -mt-px flex h-6 w-[211px] items-end rounded-sm border-[3px] border-[#00ffff] bg-[#696969] pl-[33px] text-left leading-4">
            Modifier un profil
          </button>
        </li>
        <li className="ml-5 mr-1 mt-[5px] h-px bg-[#303030]" />
        <li className="mt-0.5">
          <button className="h-[21px] pl-[34px]">Créer un préréglage...</button>
        </li>
        <li>
          <button className="h-[21px] pl-[34px]">Gérer les préréglages</button>
        </li>
      </ul>
    </section>
  );
}

/* ---------- document area ---------- */

function DocumentArea() {
  return (
    <main className="relative flex min-w-0 flex-1 flex-col bg-[#353535]">
      <div className="flex h-[29px] shrink-0 items-center justify-between border-b border-[#262626] pl-[10px] pr-[9px]">
        <Icon w={7} h={8}>
          <path d="M6 1L1.500 4 6 7" stroke="#bbb" strokeWidth="1.300" />
        </Icon>
        <button aria-label="Fermer le document">
          <CloseX size={8} />
        </button>
      </div>
      <div className="flex min-h-0 flex-1">
        <div className="flex min-w-0 flex-1 flex-col">
          <HRuler />
          <div className="flex min-h-0 flex-1">
            <VRuler />
            <Canvas />
          </div>
        </div>
        <div className="flex w-[18px] shrink-0 flex-col items-center bg-[#3a3a3a] pb-1 pt-[6px]">
          <ArrowUp />
          <div className="mt-[81px] h-[74px] w-[7px] rounded-full bg-[#838383]" />
          <div className="mt-auto">
            <ArrowDown />
          </div>
        </div>
      </div>
      <div className="flex h-[19px] shrink-0 items-center bg-[#3c3c3c] pl-[7px] pr-[24px]">
        <Icon w={7} h={8}>
          <path d="M0 4l7-4v8z" fill="#858585" />
        </Icon>
        <div className="ml-[655px] h-2 w-[266px] rounded-full bg-[#7e7e7e]" />
        <Icon w={7} h={8} className="ml-auto">
          <path d="M7 4L0 0v8z" fill="#858585" />
        </Icon>
      </div>
      <PagesPanel />
      <ProfileDialog />
      <PreflightPanel />
    </main>
  );
}

/* ---------- right studio ---------- */

function PanelTabs({ tabs, active }) {
  return (
    <div className="flex h-[31px] shrink-0 items-stretch border-t border-[#222] bg-[#262626] pl-[7px] pr-[5px] text-[10px]">
      <div className="flex w-3 items-center">
        <Grip />
      </div>
      {tabs.map(([t, w]) => (
        <button
          key={t}
          className={
            "mt-[2px] flex items-center justify-center whitespace-nowrap pb-1 " +
            w +
            (t === active ? " bg-[#353535] text-[#f0f0f0]" : " text-[#a3a3a3]")
          }
        >
          {t}
        </button>
      ))}
      <div className="ml-auto flex items-center pb-0.5">
        <Burger />
      </div>
    </div>
  );
}

function ColorPanel() {
  return (
    <section className="flex h-[277px] shrink-0 flex-col bg-[#353535] text-[#a9a9a9]">
      <PanelTabs
        active="Couleur"
        tabs={[
          ["Trait", "w-[30px]"],
          ["Couleur", "w-[48px]"],
          ["Échantillons", "w-[67px]"],
          ["Tableau", "w-[46px]"],
        ]}
      />
      <div className="flex h-[201px] shrink-0 justify-between pl-2 pr-[7px]">
        <div className="flex w-[53px] shrink-0 flex-col justify-between">
          <button aria-label="Remplissage et trait" className="mt-[15px] w-[46px]">
            <Icon w={46} h={46}>
              <circle cx="20" cy="17" r="12.500" stroke="#555" strokeWidth="1.200" />
              <circle cx="20" cy="17" r="9.500" stroke="#000" strokeWidth="4" />
              <circle cx="20" cy="17" r="6.600" stroke="#555" />
              <circle cx="32" cy="30" r="13" fill="#353535" stroke="#555" strokeWidth="1.400" />
              <circle cx="32" cy="30" r="11.500" fill={RED} />
              <circle cx="14" cy="36" r="6" fill="#dedede" />
              <path d="M10 40l8-8" stroke="#c9404e" strokeWidth="1.600" />
              <path d="M33 5.500c5 0 9.500 3.500 10.500 9M35.500 2.500l-3 3 3 3M40.500 12l3 3 2.500-3" stroke="#a0a0a0" />
            </Icon>
          </button>
          <p className="mb-0.5 w-[24px] whitespace-pre text-right text-[10px] leading-[13px]">
            {"T: 0 \nS: 55\nI: 36"}
          </p>
        </div>
        <div className="relative flex-1">
          <div className="absolute left-0 top-[15px] flex items-center gap-px">
            <button aria-label="Pipette">
              <Dropper w={20} h={20} />
            </button>
            <span className="size-4 rounded-full border border-[#555] bg-[#ff0000]" />
          </div>
          <div className="absolute left-0 top-[38px] h-[156px] w-[149px] rounded-[50%] bg-[conic-gradient(from_90deg,#f00,#ff0,#0f0,#0ff,#00f,#f0f,#f00)] p-[15px]">
            <div className="h-full w-full rounded-[50%] bg-[#353535]" />
          </div>
          <svg className="absolute left-0 top-[38px]" width="149" height="156" fill="none" aria-hidden="true">
            <defs>
              <linearGradient id="grey" x1="0" y1="0" x2="0" y2="1">
                <stop offset="0" stopColor="#000" />
                <stop offset="1" stopColor="#fff" />
              </linearGradient>
              <linearGradient id="hue" x1="0" y1="0" x2="1" y2="0">
                <stop offset="0" stopColor="#f00" stopOpacity="0" />
                <stop offset="1" stopColor="#f00" />
              </linearGradient>
            </defs>
            <path d="M45 24l90 54-90 54z" fill="url(#grey)" />
            <path d="M45 24l90 54-90 54z" fill="url(#hue)" />
            <circle cx="79" cy="62" r="5" stroke="#e6e6e6" strokeWidth="1.600" />
            <circle cx="141" cy="77" r="5" stroke="#fff" strokeWidth="1.600" />
          </svg>
        </div>
        <div className="-ml-4 flex shrink-0 flex-col items-end justify-between pb-0.5 pt-[28px]">
          <div className="grid size-[30px] grid-cols-2 gap-px border border-black bg-black">
            <span className="bg-black" />
            <span className="bg-white" />
            <span className="bg-[#8c2929]" />
            <span className="bg-[#eaeaea]" />
          </div>
          <label className="flex items-center gap-px">
            #:
            <input defaultValue="8C2929" className="h-[19px] w-12 bg-[#1f1f1f] pl-px text-[#e2e2e2]" />
          </label>
        </div>
      </div>
      <label htmlFor="opacite" className="pl-[14px] pt-[2px] text-[10px] leading-4">Opacité</label>
      <div className="flex items-center pl-[18px] pr-3">
        <span className="size-4 rounded-full border border-[#555] bg-[#8c2929]" />
        <input
          id="opacite"
          type="range"
          defaultValue="100"
          className="ml-[6px] h-[10px] w-[152px] min-w-0 flex-1 appearance-none rounded-full bg-[linear-gradient(to_right,rgba(250,250,250,0.95),rgba(44,44,44,0.88)),repeating-conic-gradient(#888_0_25%,#3a3a3a_0_50%)] bg-[length:100%_100%,8px_8px] [&::-webkit-slider-thumb]:size-3 [&::-webkit-slider-thumb]:appearance-none [&::-webkit-slider-thumb]:rounded-full [&::-webkit-slider-thumb]:border-2 [&::-webkit-slider-thumb]:border-[#e0e0e0] [&::-webkit-slider-thumb]:bg-[#2c2c2c]"
        />
        <input aria-label="Opacité en pour cent" defaultValue="100 %" className="ml-[5px] h-[19px] w-[43px] bg-[#1f1f1f] pl-[5px] text-[#e2e2e2]" />
        <button aria-label="Opacité prédéfinie" className="ml-px flex h-[19px] w-[14px] items-center justify-center bg-[#434343]">
          <Chevron />
        </button>
      </div>
    </section>
  );
}

function LayersPanel() {
  return (
    <section className="flex min-h-0 flex-1 flex-col bg-[#282828]">
      <PanelTabs
        active="Calques"
        tabs={[
          ["Calques", "w-[48px]"],
          ["Styles de texte", "w-[80px]"],
        ]}
      />
      <div className="flex h-[31px] shrink-0 items-center bg-[#333] pl-2 pr-[7px]">
        <span className="w-10 shrink-0 text-[10px] text-[#a9a9a9]">Opacité:</span>
        <Select label="Opacité du calque" value="100 %" className="h-5 w-[55px] bg-[#1f1f1f]" pad="pl-[6px]" chevron="right-[2px]" />
        <Select label="Mode de fusion" value="Normal" className="ml-[5px] h-[18px] w-[113px] bg-[#434343]" pad="pl-1" chevron="right-[2px]" />
        <div className="ml-auto flex items-center gap-[13px]">
          <Icon w={11} h={11} box="0 0 14 14">
            <circle cx="7" cy="7" r="3.500" stroke="#9a9a9a" strokeWidth="3" />
            <circle cx="7" cy="7" r="5.800" stroke="#9a9a9a" strokeWidth="2.400" strokeDasharray="2.300 2.255" />
          </Icon>
          <Icon w={9} h={12}>
            <path d="M0.500 5.500h8V12h-8z" fill="#9a9a9a" />
            <path d="M2 5.500V3c0-3 5-3 5 0v2.500" stroke="#9a9a9a" strokeWidth="1.200" />
          </Icon>
        </div>
      </div>
      <button className="mr-[15px] flex h-10 shrink-0 items-stretch border border-black bg-[#4c6a8e] text-left">
        <span className="flex w-[17px] items-center justify-center border-r border-black">
          <Icon w={10} h={13}>
            <path d="M0 0h4v4H0z" fill="#94a5b9" />
            <path d="M7.500 3l2 2.500h-4zM7.500 8l2 2-2 2-2-2z" fill="#94a5b9" />
            <circle cx="2" cy="10.500" r="2" fill="#94a5b9" />
          </Icon>
        </span>
        <span className="flex w-[37px] items-center justify-center border-r border-black">
          <span className="flex h-[34px] w-8 items-center bg-[#262626]">
            <span className="h-[14px] w-full bg-[#8c2929]" />
          </span>
        </span>
        <span className="flex flex-1 items-center pl-1 pt-px text-[#a3b4c8]">Rectangle</span>
        <span className="mr-[10px] size-[9px] self-center rounded-full bg-[#a0a0a0]" />
      </button>
      <div className="mt-auto flex h-[27px] shrink-0 items-center bg-[#353535] pl-[5px] pr-[5px]">
        <button aria-label="Calques liés" className="flex size-[21px] items-center justify-center bg-[#262626]">
          <Icon w={16} h={16}>
            <path d="M1 1h8v9H1z" stroke="#909090" strokeWidth="1.500" />
            <path d="M4 13h8V4M7 15.500h8V7" stroke="#909090" strokeWidth="1.500" />
          </Icon>
        </button>
        <div className="ml-[99px] flex items-center gap-[5px]">
          <Icon w={14} h={13}>
            <path d="M0 0h14v13H0z" fill="#a2a2a2" />
            <ellipse cx="7" cy="6.500" rx="3.500" ry="3.500" fill="#2a2a2a" />
          </Icon>
          <Icon w={16} h={17}>
            <circle cx="8" cy="8.500" r="7.300" stroke="#a2a2a2" strokeWidth="1.300" />
            <path d="M11.800 4.600A5.300 5.300 0 014.200 12.400z" fill="#a2a2a2" />
          </Icon>
          <Icon w={13} h={18}>
            <path d="M0 1h13M0 17h13" stroke="#a2a2a2" strokeWidth="1.400" />
            <path d="M1.500 15V4.500h4M1.500 9.500H5M5.500 4.500L12 15M12 4.500L5.500 15" stroke="#a2a2a2" strokeWidth="1.700" />
          </Icon>
        </div>
        <div className="ml-auto flex items-center gap-[8px]">
          <DocAdd lines color="#a2a2a2" />
          <Trash color="#a2a2a2" />
        </div>
      </div>
    </section>
  );
}

function Field({ label, value }) {
  return (
    <label className="flex items-center justify-end gap-1 text-[#a3a3a3]">
      <span>{label}</span>
      <input defaultValue={value} className="h-[21px] w-[65px] rounded-sm bg-[#1f1f1f] pl-[6px] text-[#e4e4e4]" />
    </label>
  );
}

function AngleField({ label }) {
  return (
    <div className="flex items-center justify-end gap-1 pt-[6px] text-[#a3a3a3]">
      <span>{label}</span>
      <Select label={label} value="0 °" className="h-[21px] w-[65px] bg-[#1f1f1f]" pad="pl-[6px]" chevron="right-[2px]" />
    </div>
  );
}

function TransformPanel() {
  return (
    <section className="flex h-[168px] shrink-0 flex-col bg-[#343434]">
      <PanelTabs
        active="Transformer"
        tabs={[
          ["Transformer", "w-[67px]"],
          ["Navigateur", "w-[66px]"],
          ["Historique", "w-[58px]"],
        ]}
      />
      <div className="flex pl-[15px] pt-[13px]">
        <Icon w={38} h={40} className="mt-[21px]">
          <path d="M5 5h30v32H5z" fill="#666" />
          <path
            d="M17 2h6v6h-6zM32 2h6v6h-6zM2 18h6v6H2zM17 18h6v6h-6zM32 18h6v6h-6zM2 34h6v6H2zM17 34h6v6h-6zM32 34h6v6h-6z"
            fill="#bcbcbc"
          />
          <path d="M0 0h9v9H0z" fill="#fff" />
        </Icon>
        <div className="ml-[15px] grid grid-cols-[80px_80px] gap-x-[14px] gap-y-1">
          <Field label="X:" value="-1,56 mm" />
          <Field label="L:" value="49,31 mm" />
          <Field label="Y:" value="26,33 mm" />
          <Field label="H:" value="19,81 mm" />
          <AngleField label="R:" />
          <AngleField label="S:" />
        </div>
        <Icon w={9} h={22} className="ml-3 mt-[13px]">
          <path d="M2 7V1h5v6M2 14.500v6h5v-6M0 10.500h3M6 10.500h3M4.500 7.500v6" stroke="#909090" strokeWidth="1.200" />
        </Icon>
      </div>
      <div className="mr-[25px] mt-2 flex justify-end gap-px">
        <button aria-label="Mise à l'échelle" className="flex h-[27px] w-[30px] items-center justify-center rounded-l-sm bg-[#434343]">
          <Icon w={16} h={16}>
            <path d="M0.500 6V0.500h15v15H10" stroke="#707070" strokeDasharray="4 2" />
            <rect y="8" width="8" height="8" rx="1.500" fill="#707070" />
          </Icon>
        </button>
        <button aria-label="Options d'échelle" className="flex h-[27px] w-[14px] items-center justify-center rounded-r-sm bg-[#434343]">
          <Chevron />
        </button>
      </div>
    </section>
  );
}

/* ---------- status bar ---------- */

function StatusBar() {
  return (
    <footer className="flex h-[26px] shrink-0 items-center bg-[#333] pl-[10px] text-[#a8a8a8]">
      <button aria-label="Première page">
        <Icon w={10} h={10}>
          <path d="M1 0v10" stroke="#8a8a8a" strokeWidth="1.300" />
          <path d="M10 0v10L2.500 5z" fill="#8a8a8a" />
        </Icon>
      </button>
      <button aria-label="Page précédente" className="ml-[9px]">
        <Icon w={8} h={10}>
          <path d="M8 0v10L0 5z" fill="#8a8a8a" />
        </Icon>
      </button>
      <span className="ml-[29px] w-[61px] whitespace-nowrap pt-px text-[#dcdcdc]">1 sur 2</span>
      <button aria-label="Page suivante">
        <Icon w={8} h={10}>
          <path d="M0 0v10l8-5z" fill="#e2e2e2" />
        </Icon>
      </button>
      <button aria-label="Dernière page" className="ml-[9px]">
        <Icon w={10} h={10}>
          <path d="M0 0v10l8-5z" fill="#e2e2e2" />
          <path d="M9.400 0v10" stroke="#e2e2e2" strokeWidth="1.300" />
        </Icon>
      </button>
      <Icon w={12} h={14} className="ml-[9px]">
        <path d="M0.500 0.500h8v11h-8zM9.500 3v10H3M11.500 4v9.500H5" stroke="#8a8a8a" />
        <path d="M2 2.500h5M2 4.500h5M2 6.500h5M2 8.500h5" stroke="#8a8a8a" />
      </Icon>
      <Icon w={13} h={10} className="ml-[8px]">
        <path d="M0 2h6.500c4 0 5.500 1.500 5.500 3.500S10.500 9 8 9M3 0L1 2l2 2" stroke="#7a7a7a" strokeWidth="1.300" />
        <circle cx="6" cy="6.500" r="2.200" stroke="#7a7a7a" strokeWidth="1.300" />
      </Icon>
      <button
        aria-label="Contrôle en amont"
        className="ml-[5px] flex h-[26px] w-8 shrink-0 items-center justify-center rounded-sm border-[3px] border-[#00ffff] bg-[#262626]"
      >
        <Icon w={14} h={16}>
          <path d="M5 2V1h8.300v13.500H3.500v-2.500" stroke="#d0d0d0" strokeWidth="1.300" />
          <path d="M6 1l5.500 11H0.500z" fill="#d0a548" />
          <path d="M6 4.500v4M6 9.500v1.300" stroke="#443" strokeWidth="1.200" />
        </Icon>
      </button>
      <p className="ml-[9px] whitespace-nowrap pt-0.5 [&>b]:font-bold [&>b]:text-[#f4f4f4]">
        "Rectangle" sélectionné(s). <b>Glisser</b> pour déplacer la sélection. <b>Cliquer</b> sur un autre objet pour le
        sélectionner. <b>Cliquer</b> sur une zone vide pour annuler la sélection. <b>Renvoyer</b> pour saisir/dupliquer des
        valeurs.
      </p>
    </footer>
  );
}

export default function App() {
  return (
    <div className="flex h-screen flex-col overflow-hidden bg-[#333] font-['Open_Sans','Noto_Sans',sans-serif] text-[11px] leading-4">
      <MenuBar />
      <Toolbar />
      <ContextBar />
      <div className="flex min-h-0 flex-1">
        <ToolColumn />
        <DocumentArea />
        <div className="flex w-[272px] shrink-0 flex-col border-l-[5px] border-[#2e2e2e]">
          <ColorPanel />
          <LayersPanel />
          <TransformPanel />
        </div>
      </div>
      <StatusBar />
    </div>
  );
}
